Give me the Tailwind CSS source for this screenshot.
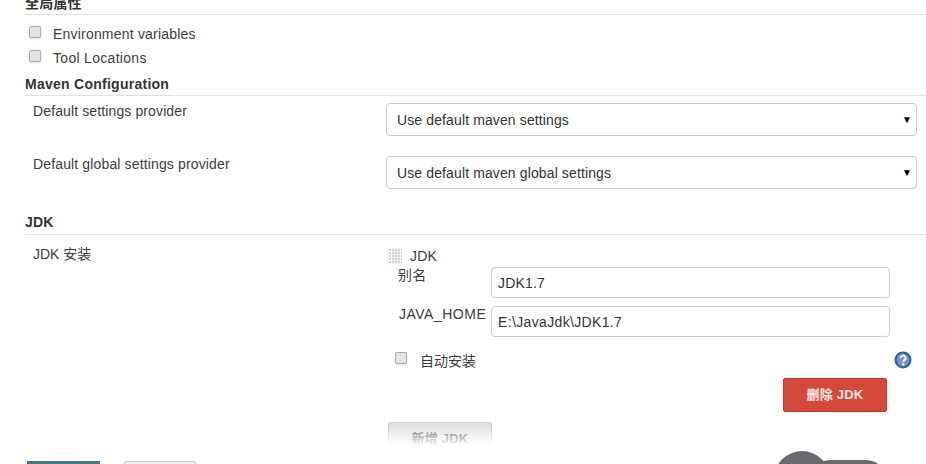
<!DOCTYPE html>
<html lang="zh">
<head>
    <meta charset="UTF-8">
    <title>JDK Configuration</title>
    <script src="https://cdn.jsdelivr.net/npm/@tailwindcss/browser@4"></script>
</head>
<body class="bg-white">
<div class="relative w-[926px] h-[464px] overflow-hidden bg-white text-[14px] leading-[20px] text-[#3d3d3d] tracking-[0.2px] font-['Liberation_Sans','Noto_Sans_CJK_SC',sans-serif]">

    <!-- 全局属性 -->
    <div class="-mt-[7px] pl-[25px]">
        <div class="h-[22px] border-b border-[#e1e1e1] font-bold text-[#333]">全局属性</div>
        <div class="mt-[9px] flex h-[20px] items-center">
            <span class="ml-[4px] -mt-[5px] h-[12px] w-[12px] rounded-[2px] border border-[#aaa] bg-[#e4e4e4] shadow-sm"></span>
            <span class="ml-[12px]">Environment variables</span>
        </div>
        <div class="mt-[4px] flex h-[20px] items-center">
            <span class="ml-[4px] -mt-[5px] h-[12px] w-[12px] rounded-[2px] border border-[#aaa] bg-[#e4e4e4] shadow-sm"></span>
            <span class="ml-[12px] tracking-[0.3px]">Tool Locations</span>
        </div>
    </div>

    <!-- Maven Configuration -->
    <div class="mt-[6px] pl-[25px]">
        <div class="h-[22px] border-b border-[#e1e1e1] font-bold tracking-[0.26px] text-[#333]">Maven Configuration</div>
        <div class="mt-[7px] flex">
            <div class="w-[361px] pl-[8px] -mt-[2px] tracking-[0.12px]">Default settings provider</div>
            <div class="flex h-[33px] w-[531px] items-center justify-between rounded-[4px] border border-[#ccc] pl-[10px] pr-[4px] tracking-[0.12px] text-[#333]">
                <span>Use default maven settings</span>
                <span class="text-[10px] text-black">▼</span>
            </div>
        </div>
        <div class="mt-[20px] flex">
            <div class="w-[361px] pl-[8px] -mt-[2px] tracking-[0.14px]">Default global settings provider</div>
            <div class="flex h-[33px] w-[531px] items-center justify-between rounded-[4px] border border-[#ccc] pl-[10px] pr-[4px] tracking-[0.12px] text-[#333]">
                <span>Use default maven global settings</span>
                <span class="text-[10px] text-black">▼</span>
            </div>
        </div>
    </div>

    <!-- JDK -->
    <div class="mt-[23px] pl-[25px]">
        <div class="h-[23px] border-b border-[#e1e1e1] font-bold text-[#333]">JDK</div>
        <div class="mt-[9px] flex">
            <div class="w-[361px] pl-[8px] tracking-normal">JDK 安装</div>
            <div class="w-[505px] pl-[3px]">
                <div class="mt-[5px] flex h-[14px] items-center">
                    <svg width="13" height="14" viewBox="0 0 13 14">
                        <defs>
                            <pattern id="grip" width="3" height="3" patternUnits="userSpaceOnUse">
                                <rect width="2" height="2" fill="#cfcfcf"/>
                            </pattern>
                        </defs>
                        <rect width="13" height="14" fill="url(#grip)"/>
                    </svg>
                    <span class="ml-[8px]">JDK</span>
                </div>
                <div class="mt-[4px] flex">
                    <div class="w-[102px] pl-[9px] -mt-[2px]">别名</div>
                    <div class="flex h-[31px] w-[399px] items-center rounded-[4px] border border-[#ccc] pl-[6px] text-[#333]">JDK1.7</div>
                </div>
                <div class="mt-[8px] flex">
                    <div class="w-[102px] pl-[10px] -mt-[2px] whitespace-nowrap tracking-[0.5px]">JAVA_HOME</div>
                    <div class="flex h-[31px] w-[399px] items-center rounded-[4px] border border-[#ccc] pl-[6px] tracking-[0.35px] text-[#333]">E:\JavaJdk\JDK1.7</div>
                </div>
                <div class="mt-[13px] flex h-[20px] w-[523px] items-center">
                    <span class="ml-[6px] -mt-[4px] h-[12px] w-[12px] shrink-0 rounded-[2px] border border-[#aaa] bg-[#e4e4e4] shadow-sm"></span>
                    <span class="ml-[13px] mt-[2px] whitespace-nowrap tracking-normal">自动安装</span>
                    <svg class="ml-auto shrink-0" width="18" height="18" viewBox="0 0 18 18">
                        <circle cx="9" cy="9" r="8.5" fill="#2f5d9e"/>
                        <circle cx="9" cy="9" r="6.5" fill="#6f93c6"/>
                        <path d="M6.4 7a2.6 2.4 0 1 1 3.9 2.1c-.8.5-1.1.9-1.1 1.7" fill="none" stroke="#fff" stroke-width="2"/>
                        <rect x="8.1" y="12.2" width="2.2" height="2.2" fill="#fff"/>
                    </svg>
                </div>
                <div class="mt-[8px] flex justify-end pr-[4px]">
                    <div class="flex h-[34px] w-[104px] items-center justify-center rounded-[2px] border border-[#c23b2c] bg-[#d5493a] text-[13px] font-bold text-[#fbe9e6]">删除 JDK</div>
                </div>
                <div class="mt-[10px] -ml-[1px] flex h-[34px] w-[104px] items-center justify-center rounded-[2px] border border-[#ccc] bg-gradient-to-b from-[#e2e2e2] to-[#f2f2f2] text-[13px] font-bold text-[#777]">新增 JDK</div>
            </div>
        </div>
    </div>

    <!-- fade above the sticky footer -->
    <div class="absolute bottom-0 left-0 h-[36px] w-full bg-gradient-to-b from-white/0 via-white to-white"></div>

    <!-- sticky footer buttons -->
    <div class="absolute left-[27px] top-[461px] h-[10px] w-[73px] bg-[#4b758b]"></div>
    <div class="absolute left-[124px] top-[461px] h-[10px] w-[72px] rounded-t-[2px] border border-[#ccc] bg-[#eee]"></div>

    <!-- floating widget -->
    <div class="absolute left-[774px] top-[451px] h-[56px] w-[56px] rounded-full bg-[#686a70]"></div>
    <div class="absolute left-[810px] top-[460px] h-[40px] w-[76px] rounded-full bg-[#686a70]"></div>
</div>
</body>
</html>
